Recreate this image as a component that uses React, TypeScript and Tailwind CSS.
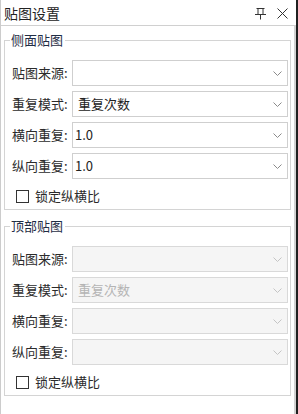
import React from "react";

const font = { fontFamily: '"Noto Sans CJK SC", "Noto Sans", sans-serif' };

function Chevron({ disabled }: { disabled?: boolean }) {
  return (
    <svg width="9" height="5" viewBox="0 0 9 5" className="shrink-0">
      <polyline
        points="0.5,0.5 4.5,4.5 8.5,0.5"
        fill="none"
        stroke={disabled ? "#c4c4c4" : "#8a8a8a"}
        strokeWidth="1"
      />
    </svg>
  );
}

function Combo({
  value,
  disabled,
  editable,
}: {
  value?: string;
  disabled?: boolean;
  editable?: boolean;
}) {
  return (
    <div
      className={`flex h-[26px] flex-1 items-center border pr-[5px] ${
        editable ? "pl-[2px]" : "pl-[5px]"
      } ${disabled ? "border-[#d9d9d9] bg-[#f5f5f5] text-[#b4b4b4]" : "border-[#cfcfcf] bg-white text-[#222]"}`}
    >
      <span className="flex-1 truncate text-[13px] leading-[18px]">{value}</span>
      <Chevron disabled={disabled} />
    </div>
  );
}

type Row = { label: string; value?: string; editable?: boolean };

function Group({ title, rows, disabled }: { title: string; rows: Row[]; disabled?: boolean }) {
  return (
    <fieldset className="border border-[#d4d4d4] pl-[5px] pr-[2px] pt-[11px] pb-[4px]">
      <legend className="pl-[1px] pr-[2px] text-[13px] leading-[18px] text-[#1f2d45]">{title}</legend>
      <div className="flex flex-col gap-[5px] pl-[2px]">
        {rows.map((r) => (
          <div key={r.label} className="flex items-center">
            <span className="w-[60px] shrink-0 text-[13px] leading-[18px] text-[#2b2b2b]">{r.label}</span>
            <Combo value={r.value} disabled={disabled} editable={r.editable} />
          </div>
        ))}
      </div>
      <div className="mt-[8px] flex h-[18px] items-center pl-[6px]">
        <span className="h-[13px] w-[13px] shrink-0 border border-[#333] bg-white" />
        <span className="ml-[6px] text-[13px] leading-[18px] text-[#2b2b2b]">锁定纵横比</span>
      </div>
    </fieldset>
  );
}

export default function App() {
  const side: Row[] = [
    { label: "贴图来源:" },
    { label: "重复模式:", value: "重复次数" },
    { label: "横向重复:", value: "1.0", editable: true },
    { label: "纵向重复:", value: "1.0", editable: true },
  ];
  const top: Row[] = [
    { label: "贴图来源:" },
    { label: "重复模式:", value: "重复次数" },
    { label: "横向重复:", editable: true },
    { label: "纵向重复:", editable: true },
  ];

  return (
    <div className="flex h-[414px] w-[298px] bg-white" style={font}>
      <div className="flex w-[296px] flex-col border-l border-[#cccccc]">
        {/* title bar */}
        <div className="flex h-[26px] shrink-0 items-center border-b border-[#d0d0d0] pl-[3px] pr-[8px]">
          <span className="flex-1 text-[14px] leading-[20px] text-[#222]">贴图设置</span>
          <svg width="11" height="12" viewBox="0 0 11 12" className="mr-[11px] mt-[2px]">
            <path d="M1.5 0.5H9.5M3 0.5V6M8 0.5V6M0 6.5H11M5.5 6.5V11.5" stroke="#333" strokeWidth="1" fill="none" />
          </svg>
          <svg width="11" height="11" viewBox="0 0 11 11" className="mt-[2px]">
            <path d="M0.5 0.5L10.5 10.5M10.5 0.5L0.5 10.5" stroke="#333" strokeWidth="1" fill="none" />
          </svg>
        </div>

        <div className="flex flex-1">
          <div className="flex flex-1 flex-col gap-[7px] px-[3px] pt-[5px]">
            <Group title="侧面贴图" rows={side} />
            <Group title="顶部贴图" rows={top} disabled />
          </div>
          <div className="w-[2px] bg-[#d2d2d2]" />
        </div>
      </div>
      <div className="w-[2px] bg-[#202020]" />
    </div>
  );
}
